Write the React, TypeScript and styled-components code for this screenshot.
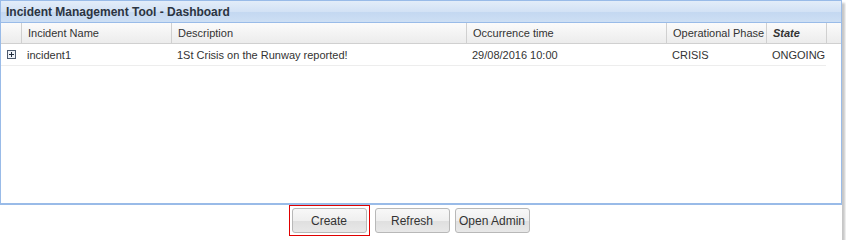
import styled, { createGlobalStyle } from "styled-components";

const GlobalStyle = createGlobalStyle`
  body {
    margin: 0;
    background: #ffffff;
    font-family: "Liberation Sans", Arial, sans-serif;
  }
`;

const columns = "20px 150px 295px 200px 100px 60px";

const Frame = styled.div`
  width: 842px;
  height: 240px;
  background: #ffffff;
  box-shadow: 3px 3px 2px rgba(0, 0, 0, 0.22);
  display: flex;
  flex-direction: column;
`;

const GridPanel = styled.div`
  height: 202px;
  border: 1px solid #99bbe8;
  border-bottom-width: 2px;
  display: flex;
  flex-direction: column;
`;

const TitleBar = styled.div`
  height: 21px;
  display: flex;
  align-items: center;
  padding-left: 5px;
  background: linear-gradient(#e3edf9, #d3e2f5 50%, #c4d8f1 55%, #cddff4);
  border-bottom: 1px solid #99bbe8;
  font-family: "Liberation Sans", Arial, sans-serif;
  font-weight: bold;
  font-size: 12px;
  color: #2b3441;
`;

const HeaderRow = styled.div`
  display: grid;
  grid-template-columns: ${columns} 1fr;
  height: 20px;
  background: linear-gradient(#fbfbfb, #ececec);
  border-bottom: 1px solid #d0d0d0;
`;

const DataRow = styled.div`
  display: grid;
  grid-template-columns: ${columns};
  width: 825px;
  height: 21px;
  border-bottom: 1px solid #ededed;
`;

const Cell = styled.div<{ $header?: boolean; $strong?: boolean }>`
  display: flex;
  align-items: center;
  padding-left: 6px;
  font-size: 11px;
  color: #333333;
  white-space: nowrap;
  overflow: hidden;
  font-weight: ${(p) => (p.$strong ? "bold" : "normal")};
  font-style: ${(p) => (p.$strong ? "italic" : "normal")};
  border-left: ${(p) => (p.$header ? "1px solid #d0d0d0" : "none")};
  &:first-child {
    border-left: none;
    padding-left: 0;
    justify-content: center;
  }
`;

const HeaderEnd = styled.div`
  border-left: 1px solid #d0d0d0;
`;

const Body = styled.div`
  flex: 1;
  background: #ffffff;
`;

const Toolbar = styled.div`
  flex: 1;
  display: flex;
  justify-content: center;
  align-items: center;
  gap: 5px;
  padding-bottom: 4px;
  padding-right: 24px;
`;

const Focus = styled.div`
  border: 1px solid #e00000;
  padding: 2px;
  display: flex;
`;

const Button = styled.button`
  height: 25px;
  width: 75px;
  padding: 0;
  border: 1px solid #b8b8b8;
  border-radius: 3px;
  background: linear-gradient(#f8f8f8, #efefef 50%, #dfdfdf 51%, #e8e8e8);
  font-family: "Liberation Sans", Arial, sans-serif;
  font-size: 12px;
  color: #333333;
  outline: none;
`;

const ExpandIcon = () => (
  <svg width="9" height="9" viewBox="0 0 9 9">
    <rect x="0.5" y="0.5" width="8" height="8" fill="#eef2f8" stroke="#4d5a6e" />
    <path d="M2 4.5h5M4.5 2v5" stroke="#1f2a3a" strokeWidth="1" />
  </svg>
);

const headers = ["Incident Name", "Description", "Occurrence time", "Operational Phase"];
const incidents = [
  {
    name: "incident1",
    description: "1St Crisis on the Runway reported!",
    time: "29/08/2016 10:00",
    phase: "CRISIS",
    state: "ONGOING",
  },
];

export default function App() {
  return (
    <>
      <GlobalStyle />
      <Frame>
        <GridPanel>
          <TitleBar>Incident Management Tool - Dashboard</TitleBar>
          <HeaderRow>
            <Cell $header />
            {headers.map((h) => (
              <Cell $header key={h}>
                {h}
              </Cell>
            ))}
            <Cell $header $strong>
              State
            </Cell>
            <HeaderEnd />
          </HeaderRow>
          <Body>
            {incidents.map((i) => (
              <DataRow key={i.name}>
                <Cell>
                  <ExpandIcon />
                </Cell>
                <Cell>{i.name}</Cell>
                <Cell>{i.description}</Cell>
                <Cell>{i.time}</Cell>
                <Cell>{i.phase}</Cell>
                <Cell>{i.state}</Cell>
              </DataRow>
            ))}
          </Body>
        </GridPanel>
        <Toolbar>
          <Focus>
            <Button>Create</Button>
          </Focus>
          <Button>Refresh</Button>
          <Button>Open Admin</Button>
        </Toolbar>
      </Frame>
    </>
  );
}
